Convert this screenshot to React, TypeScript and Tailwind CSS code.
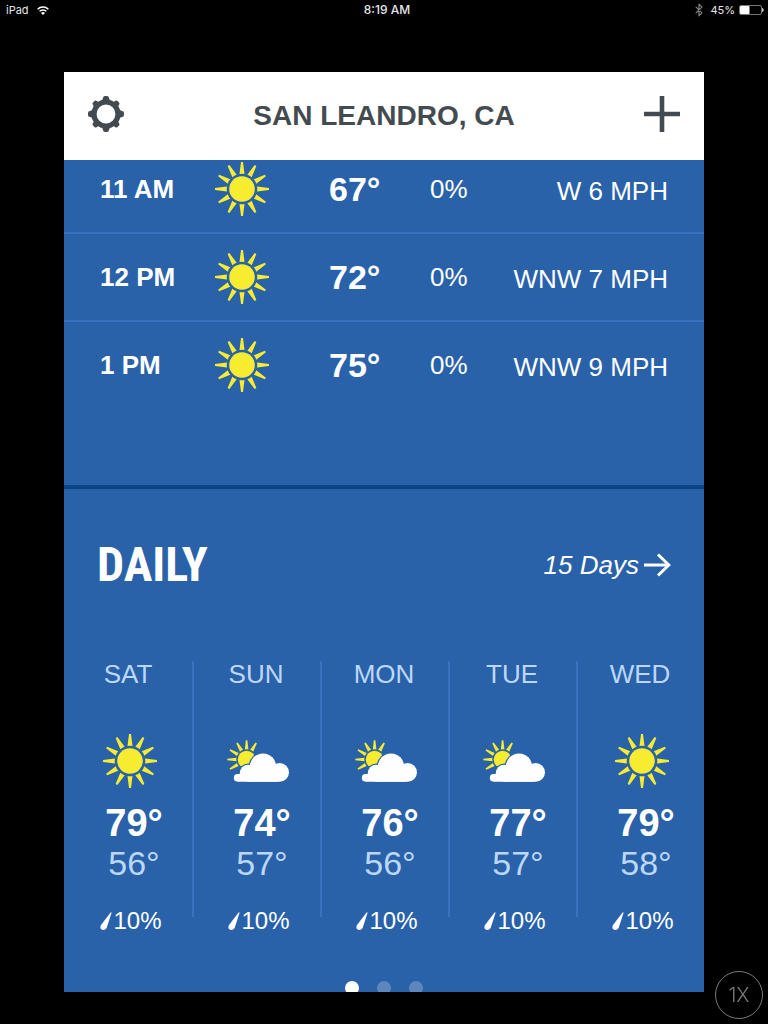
import React from 'react';
import { Bluetooth } from 'lucide-react';

type Condition = 'sunny' | 'partly-cloudy';

interface HourlyForecast {
    time: string;
    temp: number;
    precip: number;
    wind: string;
}

interface DailyForecast {
    day: string;
    condition: Condition;
    high: number;
    low: number;
    precip: number;
}

const hourly: HourlyForecast[] = [
    { time: '11 AM', temp: 67, precip: 0, wind: 'W 6 MPH' },
    { time: '12 PM', temp: 72, precip: 0, wind: 'WNW 7 MPH' },
    { time: '1 PM', temp: 75, precip: 0, wind: 'WNW 9 MPH' },
];

const daily: DailyForecast[] = [
    { day: 'SAT', condition: 'sunny', high: 79, low: 56, precip: 10 },
    { day: 'SUN', condition: 'partly-cloudy', high: 74, low: 57, precip: 10 },
    { day: 'MON', condition: 'partly-cloudy', high: 76, low: 56, precip: 10 },
    { day: 'TUE', condition: 'partly-cloudy', high: 77, low: 57, precip: 10 },
    { day: 'WED', condition: 'sunny', high: 79, low: 58, precip: 10 },
];

const rayAngles = [0, 30, 60, 90, 120, 150, 180, 210, 240, 270, 300, 330];

const SunIcon: React.FC = () => (
    <svg className="w-16 h-14" viewBox="0 0 64 56" fill="#f8ec31" aria-hidden="true">
        <circle cx="32" cy="28" r="12.8" />
        {rayAngles.map((angle) => (
            <path key={angle} d="M29.5 13 L31 1 H33 L34.5 13 Q32 12.3 29.5 13 Z" transform={`rotate(${angle} 32 28)`} />
        ))}
    </svg>
);

const CloudShape: React.FC = () => (
    <>
        <circle cx="37" cy="33.6" r="13.2" />
        <circle cx="53.6" cy="39.3" r="9.4" />
        <circle cx="22.2" cy="40.2" r="8.5" />
        <rect x="7.8" y="41" width="46" height="7.7" rx="3.85" />
        <rect x="22" y="36" width="31" height="12.7" />
    </>
);

const PartlyCloudyIcon: React.FC = () => (
    <svg className="w-16 h-14" viewBox="0 0 64 56" aria-hidden="true">
        <g fill="#f8ec31">
            <circle cx="20.6" cy="26.5" r="8.8" />
            {[240, 270, 300, 330, 0, 30].map((angle) => (
                <path key={angle} d="M18.8 16.4 L19.8 7.2 H21.4 L22.4 16.4 Q20.6 15.9 18.8 16.4 Z" transform={`rotate(${angle} 20.6 26.5)`} />
            ))}
        </g>
        <g fill="#2962a9" stroke="#2962a9" strokeWidth="2.4">
            <CloudShape />
        </g>
        <g fill="#ffffff">
            <CloudShape />
        </g>
    </svg>
);

const GearIcon: React.FC = () => (
    <svg className="w-9 h-9" viewBox="0 0 36 36" fill="#434b51" aria-hidden="true">
        <circle cx="18" cy="18" r="12" fill="none" stroke="#434b51" strokeWidth="5.2" />
        {[0, 90, 180, 270].map((angle) => (
            <path key={angle} d="M12.6 5.4 Q14.6 4.6 15 2 Q15.2 0 17 0 H19 Q20.8 0 21 2 Q21.4 4.6 23.4 5.4 Z" transform={`rotate(${angle} 18 18)`} />
        ))}
        {[45, 135, 225, 315].map((angle) => (
            <path key={angle} d="M13.4 5.4 Q15.2 4.6 15.3 2.4 Q15.3 0.6 17 0.6 H19 Q20.7 0.6 20.7 2.4 Q20.8 4.6 22.6 5.4 Z" transform={`rotate(${angle} 18 18)`} />
        ))}
    </svg>
);

const StatusBar: React.FC = () => (
    <div className="grid grid-cols-3 items-center h-5 pl-1.5 pr-1 font-[Inter,sans-serif] text-[11px] text-[#e6e6e6]">
        <div className="flex items-center gap-2">
            <span>iPad</span>
            <svg className="w-3 h-[9px]" viewBox="0 0 12 9" fill="none" stroke="#ffffff" strokeWidth="1.5" aria-hidden="true">
                <path d="M0.6 3.2 A7.6 7.6 0 0 1 11.4 3.2" />
                <path d="M2.6 5.3 A4.8 4.8 0 0 1 9.4 5.3" />
                <path d="M4 6.9 A2.8 2.8 0 0 1 8 6.9 L6 9 Z" fill="#ffffff" stroke="none" />
            </svg>
        </div>
        <div className="pl-1 text-center text-xs font-medium">8:19 AM</div>
        <div className="flex items-center justify-end gap-1">
            <Bluetooth className="w-3.5 h-4 text-[#808080]" strokeWidth={2} />
            <span>45%</span>
            <svg className="w-[25px] h-[10px]" viewBox="0 0 25 10" aria-hidden="true">
                <rect x="0.5" y="0.5" width="22" height="9" rx="1.5" fill="none" stroke="#777777" />
                <rect x="1" y="1" width="9.5" height="8" rx="0.8" fill="#ffffff" />
                <path d="M23.6 3.2 Q25 5 23.6 6.8 Z" fill="#ffffff" stroke="#ffffff" strokeWidth="0.6" />
            </svg>
        </div>
    </div>
);

const HourlyTable: React.FC = () => (
    <div className="overflow-hidden pb-[75px] border-b-4 border-[#0b4386]">
        {/* list is scrolled slightly under the header */}
        <table className="w-full table-fixed border-separate border-spacing-0 -mt-[14px] text-[26px] leading-8">
            <colgroup>
                <col className="w-[146px]" />
                <col className="w-[119px]" />
                <col className="w-[101px]" />
                <col className="w-[60px]" />
                <col />
            </colgroup>
            <tbody className="[&>tr>*]:border-b-2 [&>tr>*]:border-[#3b72bd] [&>tr:last-child>*]:border-transparent">
                {hourly.map((hour) => (
                    <tr key={hour.time} className="h-[88px]">
                        <th scope="row" className="p-0 pl-9 text-left font-bold whitespace-nowrap">{hour.time}</th>
                        <td className="p-0"><SunIcon /></td>
                        <td className="p-0 text-[34px] font-bold">{hour.temp}°</td>
                        <td className="p-0">{hour.precip}%</td>
                        <td className="p-0 pt-1 pr-9 text-right whitespace-nowrap">{hour.wind}</td>
                    </tr>
                ))}
            </tbody>
        </table>
    </div>
);

const DailySection: React.FC = () => (
    <section className="pt-[52px]">
        <div className="flex items-center justify-between h-12 px-[33px]">
            <h2 className="font-['Roboto_Condensed','Roboto',sans-serif] text-5xl font-bold">DAILY</h2>
            <a href="#daily" className="flex items-center gap-1 text-[26px] italic">
                15 Days
                <svg className="w-7 h-6" viewBox="0 0 28 24" fill="none" stroke="currentColor" strokeWidth="3" aria-hidden="true">
                    <path d="M1 12 H26" />
                    <path d="M15 1.5 L25.8 12 L15 22.5" />
                </svg>
            </a>
        </div>
        <ul className="grid grid-cols-5 mt-[72px]">
            {daily.map((day) => (
                <li key={day.day} className="flex flex-col items-center h-64 pr-0.5 border-l-2 border-[#3b72bd] first:pr-0 first:border-l-0">
                    <div className="text-[26px] leading-[26px] text-[#bcd7fc]">{day.day}</div>
                    <div className="mt-[46px] pl-1">
                        {day.condition === 'sunny' ? <SunIcon /> : <PartlyCloudyIcon />}
                    </div>
                    <div className="mt-[14px] pl-3 text-[38px] leading-10 font-bold">{day.high}°</div>
                    <div className="pl-3 text-[34px] leading-10 text-[#bcd7fc]">{day.low}°</div>
                    <div className="flex items-center gap-px mt-[22px] pl-1.5 text-2xl leading-8">
                        <svg className="w-3 h-[18px]" viewBox="0 0 12 18" fill="#ffffff" aria-hidden="true">
                            <path d="M10.6 0.4 Q11.6 0 11.4 1.2 L7 15 Q6 18 3.2 18 Q0.4 17.6 0.4 15 Q0.4 14 1.2 12.8 Z" />
                        </svg>
                        {day.precip}%
                    </div>
                </li>
            ))}
        </ul>
    </section>
);

export default function App() {
    return (
        <div className="min-h-screen bg-black font-['Liberation_Sans',Arial,sans-serif] text-white">
            <StatusBar />
            <main className="w-5/6 mx-auto mt-[52px] bg-[#2962a9]">
                <header className="flex items-center justify-between h-[88px] px-6 bg-white text-[#434b51]">
                    <button type="button" aria-label="Settings" className="pb-1">
                        <GearIcon />
                    </button>
                    <h1 className="text-[28px] font-bold">SAN LEANDRO, CA</h1>
                    <button type="button" aria-label="Add location" className="pb-1">
                        <svg className="w-9 h-9" viewBox="0 0 36 36" stroke="#434b51" strokeWidth="4.6" aria-hidden="true">
                            <path d="M18 0 V36 M0 18 H36" />
                        </svg>
                    </button>
                </header>

                <HourlyTable />
                <DailySection />

                {/* Page dots, cut off by the bottom of the app window */}
                <nav aria-label="Pages" className="flex items-start justify-center gap-[18px] h-[11px] mt-16 overflow-hidden">
                    <button type="button" aria-label="Page 1" className="shrink-0 w-3.5 h-3.5 rounded-full bg-white" />
                    <button type="button" aria-label="Page 2" className="shrink-0 w-3.5 h-3.5 rounded-full bg-[#5c86be]" />
                    <button type="button" aria-label="Page 3" className="shrink-0 w-3.5 h-3.5 rounded-full bg-[#5c86be]" />
                </nav>
            </main>

            <button
                type="button"
                className="fixed right-[5px] bottom-[5px] w-12 h-12 rounded-full border border-[#7a7a7a] font-[Inter,sans-serif] text-xl font-light text-[#7a7a7a]"
            >
                1X
            </button>
        </div>
    );
}
